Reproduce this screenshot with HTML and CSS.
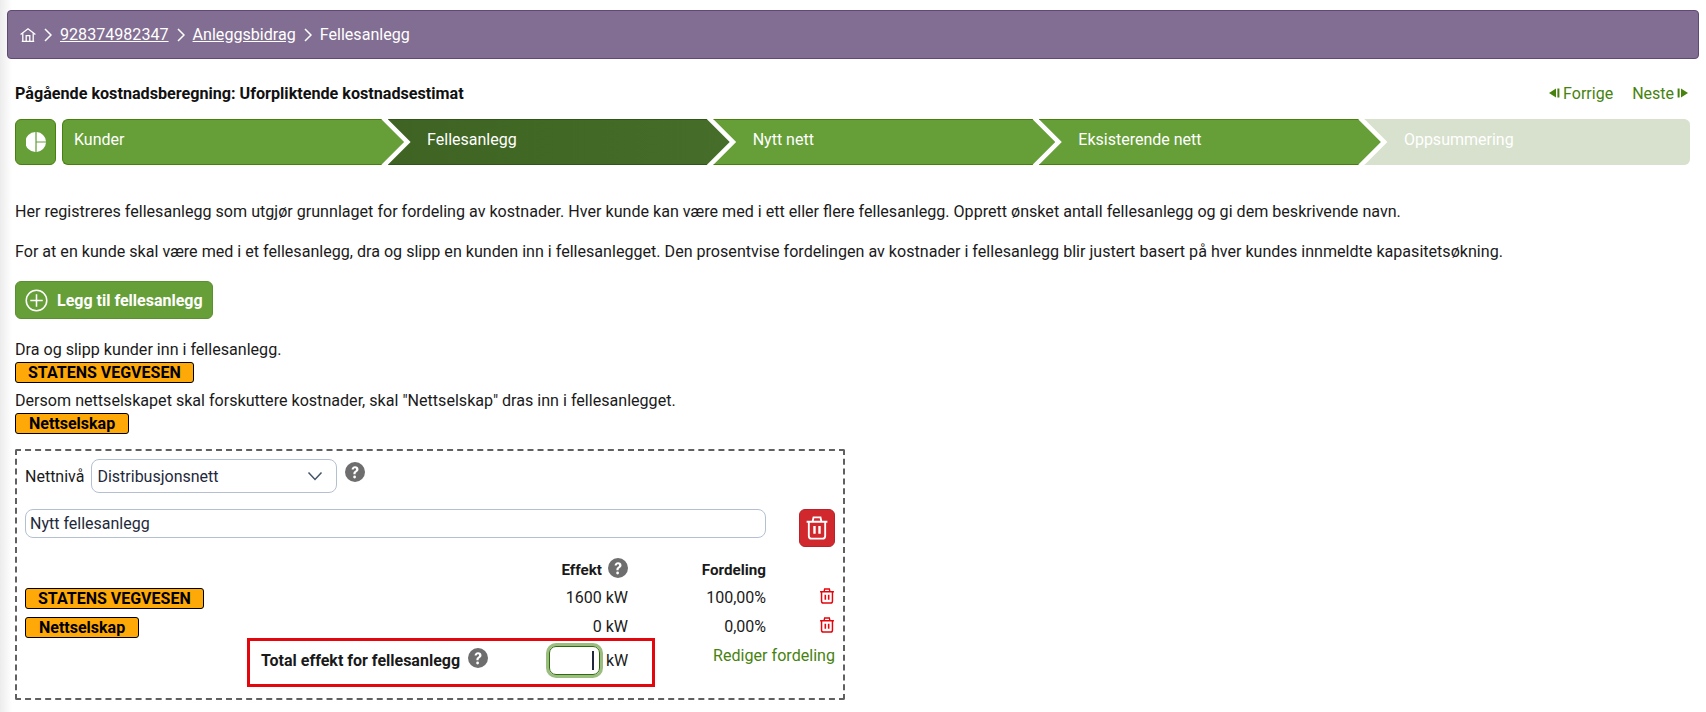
FILE: index.html
```html
<!DOCTYPE html>
<html lang="no">
<head>
<meta charset="utf-8">
<title>Fellesanlegg</title>
<link rel="stylesheet" href="styles.css">
</head>
<body>
<header class="crumbs">
  <svg class="home" viewBox="0 0 16 14" fill="none" stroke="#fff" stroke-width="1.3"><path d="M.6 6.400 8 .8l7.400 5.600"/><path d="M2.800 5.200v8M13.200 5.200v8M1.800 13.300h12.400M6.200 13V7.600h3.600V13"/></svg>
  <svg class="sep" viewBox="0 0 8 14" fill="none" stroke="#fff" stroke-width="1.5"><path d="M1 1l6 6-6 6"/></svg>
  <a class="crumb-link">928374982347</a>
  <svg class="sep" viewBox="0 0 8 14" fill="none" stroke="#fff" stroke-width="1.5"><path d="M1 1l6 6-6 6"/></svg>
  <a class="crumb-link">Anleggsbidrag</a>
  <svg class="sep" viewBox="0 0 8 14" fill="none" stroke="#fff" stroke-width="1.5"><path d="M1 1l6 6-6 6"/></svg>
  <span>Fellesanlegg</span>
</header>

<main class="content">
  <div class="title-row">
    <h1 class="title">Pågående kostnadsberegning: Uforpliktende kostnadsestimat</h1>
    <nav class="pager">
      <a class="pager-link"><svg class="pager-icon" viewBox="0 0 11 10" fill="#47820f"><path d="M7 .5v9L0 5z"/><rect x="8.400" y=".5" width="2" height="9"/></svg>Forrige</a>
      <a class="pager-link">Neste<svg class="pager-icon" viewBox="0 0 11 10" fill="#47820f"><rect x=".6" y=".5" width="2" height="9"/><path d="M4 .5v9L11 5z"/></svg></a>
    </nav>
  </div>

  <div class="progress">
    <div class="pie-box">
      <svg class="pie" viewBox="0 0 20 20" fill="#fff"><path d="M9.400 0v20A10 10 0 0 1 9.400 0z"/><path d="M10.600 0a10 10 0 0 1 9.400 9.400h-9.400z"/><path d="M10.600 10.600H20a10 10 0 0 1-9.400 9.400z"/></svg>
    </div>
    <div class="steps">
      <div class="step step-first">Kunder</div>
      <div class="step step-active">Fellesanlegg</div>
      <div class="step">Nytt nett</div>
      <div class="step">Eksisterende nett</div>
      <div class="step step-last">Oppsummering</div>
    </div>
  </div>

  <p class="intro">Her registreres fellesanlegg som utgjør grunnlaget for fordeling av kostnader. Hver kunde kan være med i ett eller flere fellesanlegg. Opprett ønsket antall fellesanlegg og gi dem beskrivende navn.</p>
  <p class="intro">For at en kunde skal være med i et fellesanlegg, dra og slipp en kunden inn i fellesanlegget. Den prosentvise fordelingen av kostnader i fellesanlegg blir justert basert på hver kundes innmeldte kapasitetsøkning.</p>

  <button class="add-btn" type="button">
    <svg class="add-icon" viewBox="0 0 24 24" fill="none" stroke="#fff" stroke-width="1.6"><circle cx="12" cy="12" r="10.700"/><path d="M12 5.500v13M5.500 12h13"/></svg>
    Legg til fellesanlegg
  </button>

  <div class="drag-text">Dra og slipp kunder inn i fellesanlegg.</div>
  <div class="tag tag-state">STATENS VEGVESEN</div>
  <div class="drag-text drag-text-second">Dersom nettselskapet skal forskuttere kostnader, skal "Nettselskap" dras inn i fellesanlegget.</div>
  <div class="tag tag-grid">Nettselskap</div>

  <section class="facility">
    <div class="level-row">
      <label class="level-label">Nettnivå</label>
      <div class="select">Distribusjonsnett
        <svg class="chevron" viewBox="0 0 16 10" fill="none" stroke="#44546a" stroke-width="1.5"><path d="M1.500 1.500 8 8.500l6.500-7"/></svg>
      </div>
      <svg class="help help-level" viewBox="0 0 20 20"><use href="#help"/></svg>
    </div>

    <div class="name-row">
      <div class="name-input">Nytt fellesanlegg</div>
      <button class="trash-btn" type="button" aria-label="Slett">
        <svg class="trash-lg" viewBox="1 1.500 22 21.500" fill="none" stroke="#fff" stroke-width="1.700"><use href="#trash"/></svg>
      </button>
    </div>

    <div class="table">
      <div></div>
      <div class="head-cell head-effect">Effekt<svg class="help" viewBox="0 0 20 20"><use href="#help"/></svg></div>
      <div class="head-cell head-share">Fordeling</div>
      <div></div>

      <div class="tag tag-state">STATENS VEGVESEN</div>
      <div class="num">1600 kW</div>
      <div class="num">100,00%</div>
      <svg class="trash-sm" viewBox="1 1.500 22 21.500" fill="none" stroke="#e3060d" stroke-width="2"><use href="#trash"/></svg>

      <div class="tag tag-grid">Nettselskap</div>
      <div class="num">0 kW</div>
      <div class="num">0,00%</div>
      <svg class="trash-sm" viewBox="1 1.500 22 21.500" fill="none" stroke="#e3060d" stroke-width="2"><use href="#trash"/></svg>
    </div>

    <div class="total-row">
      <div class="total-box">
        <strong class="total-label">Total effekt for fellesanlegg</strong>
        <svg class="help help-total" viewBox="0 0 20 20"><use href="#help"/></svg>
        <div class="effect-input"><span class="caret"></span></div>
        <span class="unit">kW</span>
      </div>
      <a class="edit-link">Rediger fordeling</a>
    </div>
  </section>
</main>

<svg class="defs" width="0" height="0" aria-hidden="true">
  <defs>
    <g id="help">
      <circle cx="10" cy="10" r="10" fill="#6e6e6e"/>
      <path d="M6.600 7.600c0-2 1.500-3.300 3.500-3.300s3.400 1.200 3.400 3c0 1.400-.8 2.100-1.800 2.800-.8.6-1.100.9-1.100 1.800v.4H8.400v-.6c0-1.300.5-2 1.500-2.700.8-.6 1.200-1 1.200-1.600 0-.7-.5-1.100-1.100-1.100-.7 0-1.200.5-1.300 1.300z" fill="#fff"/>
      <circle cx="9.600" cy="15" r="1.400" fill="#fff"/>
    </g>
    <g id="trash">
      <path d="M2.500 6.500h19M8 6.300l.8-3.800h6.400l.8 3.800"/>
      <path d="M4.500 6.500v13a2.500 2.500 0 0 0 2.500 2.500h10a2.500 2.500 0 0 0 2.500-2.500v-13"/>
      <path d="M9.700 10.500v7M14.300 10.500v7" stroke-width="2.200"/>
    </g>
  </defs>
</svg>
</body>
</html>
```

FILE: styles.css
```css
* { box-sizing: border-box; }

html, body { height: 100%; }

body {
  margin: 0;
  padding: 10px 7px 0;
  font-family: Roboto, "Liberation Sans", sans-serif;
  font-size: 16px;
  color: #1a1a1a;
  background: linear-gradient(to right, #ececec 0, #fff 12px) no-repeat;
  overflow: hidden;
}

.crumbs {
  display: flex;
  align-items: center;
  height: 49px;
  padding: 0 12px;
  background: #826e92;
  border: 1px solid #5e4a72;
  border-radius: 4px;
  color: #fff;
  font-size: 16.1px;
}
.home { width: 16px; height: 14px; }
.sep { width: 8px; height: 14px; margin: 0 8px; }
.crumb-link { text-decoration: underline; }

.content { padding: 0 9px 0 8px; }

.title-row {
  display: flex;
  justify-content: space-between;
  align-items: center;
  margin-top: 23px;
  height: 22px;
}
.title { margin: 0; font-size: 16.15px; font-weight: 700; color: #111; }
.pager { display: flex; gap: 19px; padding-right: 2px; }
.pager-link {
  display: flex;
  align-items: center;
  gap: 3px;
  color: #47820f;
}
.pager-icon { width: 11px; height: 10px; }

.progress { display: flex; gap: 6px; margin-top: 15px; height: 46px; }
.pie-box {
  flex: 0 0 41px;
  display: flex;
  align-items: center;
  justify-content: center;
  background: #669e38;
  border: 1px solid #47800f;
  border-radius: 6px;
}
.pie { width: 20px; height: 20px; }

.steps { flex: 1; display: grid; grid-template-columns: repeat(5, 1fr); }
.step {
  width: calc(100% + 16.5px);
  display: flex;
  align-items: center;
  padding: 0 0 6px 39.5px;
  background: #669e38;
  border-top: 1px solid #47800f;
  border-bottom: 1px solid #47800f;
  color: #fff;
  clip-path: polygon(0 0, calc(100% - 23px) 0, 100% 50%, calc(100% - 23px) 100%, 0 100%, 23px 50%);
}
.step-first {
  padding-left: 11px;
  border-left: 1px solid #47800f;
  border-radius: 6px 0 0 6px;
  clip-path: polygon(0 0, calc(100% - 23px) 0, 100% 50%, calc(100% - 23px) 100%, 0 100%);
}
.step-active {
  background: linear-gradient(to right, #3e6322, #466d2a);
  border-color: #30541a;
}
.step-last {
  width: 100%;
  background: #d8e1cd;
  border-color: #d8e1cd;
  border-radius: 0 6px 6px 0;
  clip-path: polygon(0 0, 100% 0, 100% 100%, 0 100%, 23px 50%);
}

.intro { margin: 0; line-height: 20px; font-size: 16.1px; }
.intro:first-of-type { margin-top: 37px; }
.intro + .intro { margin-top: 20px; }

.add-btn {
  display: flex;
  align-items: center;
  gap: 9px;
  margin-top: 19px;
  height: 38px;
  padding: 0 9px;
  background: #669e38;
  border: 1px solid #5a9030;
  border-radius: 6px;
  color: #fff;
  font: 700 16px Roboto, "Liberation Sans", sans-serif;
}
.add-icon { width: 23px; height: 23px; }

.drag-text { margin-top: 21px; line-height: 20px; font-size: 16.1px; }
.drag-text-second { margin-top: 8px; }

.tag {
  width: max-content;
  height: 21px;
  padding: 0 12px;
  display: flex;
  align-items: center;
  background: #ffa908;
  border: 1px solid #000;
  border-radius: 3px;
  color: #000;
  font-size: 16px;
  font-weight: 700;
}
.tag-grid { padding: 0 13px; }

.drag-text + .tag { margin-top: 2px; }

.facility {
  margin-top: 15px;
  width: 830px;
  height: 251px;
  padding: 8px 8px 0;
  border: 2px dashed #606060;
  border-radius: 2px;
}

.level-row { display: flex; align-items: center; height: 34px; }
.level-label { margin: 0 7px 0 0; }
.select {
  display: flex;
  align-items: center;
  justify-content: space-between;
  width: 246px;
  height: 34px;
  padding: 0 13px 0 5px;
  border: 1px solid #b4c0d2;
  border-radius: 8px;
  color: #1e293b;
}
.chevron { width: 16px; height: 10px; }
.help { width: 20px; height: 20px; flex: none; }
.help-level { margin: 0 0 8px 8px; }

.name-row { display: flex; align-items: flex-start; margin-top: 16px; }
.name-input {
  display: flex;
  align-items: center;
  width: 741px;
  height: 29px;
  padding: 0 4px;
  border: 1px solid #b4c0d2;
  border-radius: 8px;
  color: #1e293b;
}
.trash-btn {
  display: flex;
  align-items: center;
  justify-content: center;
  width: 36px;
  height: 38px;
  margin-left: 33px;
  padding: 0;
  background: #d1282e;
  border: 1px solid #b92228;
  border-radius: 6px;
}
.trash-lg { width: 24px; height: 24px; }

.table {
  display: grid;
  grid-template-columns: 1fr 100px 138px 69px;
  grid-template-rows: 20px 21px 21px;
  row-gap: 8px;
  align-items: center;
  width: 810px;
  margin-top: 13px;
}
.head-cell {
  display: flex;
  justify-content: flex-end;
  align-items: center;
  gap: 6px;
  font-weight: 700;
  font-size: 15.2px;
}
.head-effect .help { margin-top: -5px; }
.num { text-align: right; padding-bottom: 3px; }
.trash-sm { width: 16px; height: 16px; justify-self: end; align-self: start; }

.total-row { display: flex; align-items: flex-start; width: 810px; }
.total-box {
  display: flex;
  align-items: center;
  width: 408px;
  height: 49px;
  margin-left: 222px;
  padding: 0 0 5px 11px;
  border: 3px solid #e3060d;
}
.total-label { font-weight: 700; width: 207px; flex: none; }
.help-total { margin-top: -4px; }
.effect-input {
  display: flex;
  align-items: center;
  justify-content: flex-end;
  width: 51px;
  height: 29px;
  margin-left: 61px;
  padding-right: 5px;
  border: 1px solid #2f6b0c;
  border-radius: 7px;
  box-shadow: 0 0 0 3px #9cbd80;
}
.caret { width: 2px; height: 19px; background: #1e293b; }
.unit { margin-left: 6px; }
.edit-link { margin: 8px 0 0 auto; color: #47820f; font-size: 16.1px; }

.defs { position: absolute; }
```
